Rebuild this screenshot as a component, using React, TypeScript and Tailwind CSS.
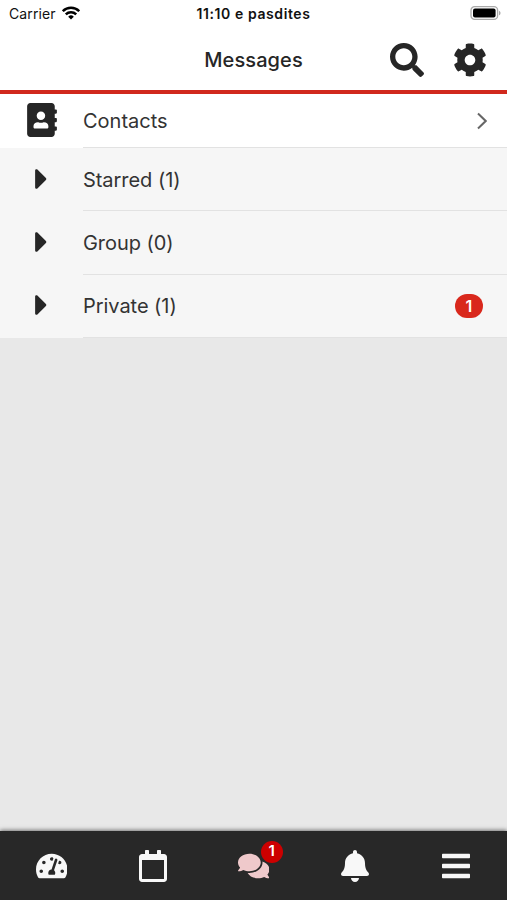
import type { ReactNode } from "react";
import {
  FaAddressBook,
  FaBars,
  FaBell,
  FaCaretRight,
  FaCog,
  FaComments,
  FaRegCalendar,
  FaSearch,
  FaTachometerAlt,
} from "react-icons/fa";

const groups = [
  { name: "Starred", count: 1, unread: 0 },
  { name: "Group", count: 0, unread: 0 },
  { name: "Private", count: 1, unread: 1 },
];

function StatusBar() {
  return (
    <div className="grid h-[26px] grid-cols-3 items-center pl-[9px] pr-[6px] text-[14px] text-[#111]">
      <div className="flex items-center gap-[6px]">
        <span className="tracking-[0.1px]">Carrier</span>
        <svg viewBox="0 0 18 14" className="h-[14px] w-[18px]" fill="none" stroke="#000" strokeWidth="2.5">
          <path d="M0.8 5.2a11.6 11.6 0 0 1 16.4 0" />
          <path d="M3.8 8.3a7.4 7.4 0 0 1 10.4 0" />
          <path d="M9 13.5 6.2 10.7a4 4 0 0 1 5.6 0z" fill="#000" stroke="none" />
        </svg>
      </div>
      <span className="whitespace-nowrap pr-[3px] text-center text-[14px] font-semibold tracking-[0.58px]">
        11:10 e pasdites
      </span>
      <svg viewBox="0 0 31 14" className="h-[14px] w-[31px] justify-self-end">
        <rect x="1" y="0.7" width="26.6" height="12.6" rx="3.6" fill="#fff" stroke="#aaa" strokeWidth="1.3" />
        <rect x="3" y="2.6" width="22.6" height="8.8" rx="2" fill="#000" />
        <path d="M29 4.7c2 .8 2 3.8 0 4.6z" fill="#aaa" />
      </svg>
    </div>
  );
}

function Row({ icon, height, children }: { icon: ReactNode; height: string; children: ReactNode }) {
  return (
    <div className={`flex ${height}`}>
      <div className="flex w-[83px] shrink-0 items-center pb-[2px]">{icon}</div>
      <div className="flex flex-1 items-center justify-between border-b border-[#e2e2e2] text-[20px] text-[#333]">
        {children}
      </div>
    </div>
  );
}

export default function App() {
  return (
    <div className="flex h-[900px] w-[507px] flex-col overflow-hidden bg-[#e8e8e8] font-['Inter',sans-serif]">
      <header className="h-[94px] shrink-0 border-b-4 border-[#d1291d] bg-white">
        <StatusBar />
        <div className="grid h-16 grid-cols-[1fr_auto_1fr] items-center pt-1">
          <span />
          <h1 className="text-[20px] font-medium tracking-[0.1px] text-[#262626]">Messages</h1>
          <div className="flex items-center justify-end gap-[29px] pb-px pr-5 text-[34px] text-[#262626]">
            <FaSearch />
            <FaCog />
          </div>
        </div>
      </header>

      <main className="flex-1">
        <div className="bg-white">
          <Row height="h-[54px]" icon={<FaAddressBook className="ml-[27px] h-[34px] w-[30px] text-[#262626]" />}>
            <span>Contacts</span>
            <svg viewBox="0 0 10 18" className="mr-5 h-[18px] w-[10px]" fill="none" stroke="#666" strokeWidth="2">
              <path d="M1 1.5 8.7 9 1 16.5" />
            </svg>
          </Row>
        </div>
        <div className="bg-[#f6f6f6]">
          {groups.map((group) => (
            <Row
              key={group.name}
              height="h-[63.3px]"
              icon={<FaCaretRight className="ml-[35px] h-[34px] w-[13px] text-[#262626]" />}
            >
              <span className="pt-px tracking-[-0.05px]">
                {group.name} ({group.count})
              </span>
              {group.unread > 0 && (
                <span className="mr-6 flex h-6 w-7 items-center justify-center rounded-full bg-[#d9281c] pt-px text-[16px] font-semibold text-white">
                  {group.unread}
                </span>
              )}
            </Row>
          ))}
        </div>
      </main>

      <nav className="grid h-[69px] shrink-0 grid-cols-5 items-center bg-[#282828] text-[#f8f8f8] shadow-[0_-1px_4px_rgba(0,0,0,0.5)]">
        <FaTachometerAlt className="ml-[2px] h-7 w-[31.5px] justify-self-center" />
        <FaRegCalendar className="ml-[2px] h-8 w-7 justify-self-center" />
        <div className="relative justify-self-center">
          <FaComments className="h-7 w-[31.5px] text-[#efc9cb]" />
          <span className="absolute -top-[11px] left-[23px] flex size-[22px] items-center justify-center rounded-full bg-[#cc0000] text-[15px] font-semibold text-white">
            1
          </span>
        </div>
        <FaBell className="h-8 w-7 justify-self-center" />
        <FaBars className="h-8 w-7 justify-self-center" />
      </nav>
    </div>
  );
}
